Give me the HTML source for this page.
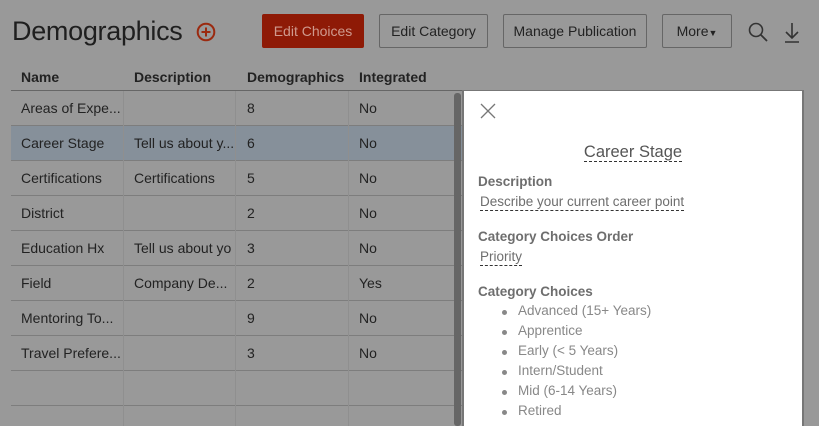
<!DOCTYPE html><html><head><style>
*{margin:0;padding:0;box-sizing:border-box}
body{width:819px;height:426px;overflow:hidden;background:#999;font-family:"Liberation Sans",sans-serif;color:#1e1e1e;position:relative}
.a{position:absolute;white-space:nowrap}
.btn{position:absolute;top:14px;height:34px;border:1px solid #666;border-radius:2px;font-size:14px;line-height:32px;text-align:center;color:#222}
.hl{position:absolute;left:11px;width:451px;height:1px;background:#7d7d7d}
.vl{position:absolute;top:91px;width:1px;height:335px;background:#8f8f8f}
.c{position:absolute;font-size:14px;color:#222;overflow:hidden;white-space:nowrap;max-width:105px}
.p{position:absolute;left:464px;top:91px;width:338px;height:335px;background:#fff}
.lab{position:absolute;left:14px;font-size:13.5px;font-weight:bold;color:#6e6e6e}
.val{position:absolute;left:16px;font-size:13.5px;color:#6e6e6e;border-bottom:1px dashed #333;line-height:17px}
.li{position:absolute;left:54px;font-size:13.5px;color:#888}
.li:before{content:"";position:absolute;left:-16px;top:7px;width:5px;height:5px;border-radius:50%;background:#888}
</style></head><body>
<div class="a" style="left:12px;top:16px;font-size:27px;color:#1f1f1f;letter-spacing:-0.3px">Demographics</div>
<svg class="a" style="left:196px;top:22px" width="20" height="20"><circle cx="10" cy="10" r="8.3" fill="none" stroke="#9b2a10" stroke-width="2"/><path d="M10 5.5v9M5.5 10h9" stroke="#9b2a10" stroke-width="2"/></svg>
<div class="btn" style="left:262px;width:102px;background:#8e1a06;border-color:#8e1a06;color:#cf9a8e">Edit Choices</div>
<div class="btn" style="left:379px;width:109px">Edit Category</div>
<div class="btn" style="left:503px;width:144px">Manage Publication</div>
<div class="btn" style="left:662px;width:70px">More<span style="font-size:9px">▼</span></div>
<svg class="a" style="left:747px;top:21px" width="22" height="22"><circle cx="9" cy="9" r="6.5" fill="none" stroke="#333" stroke-width="1.6"/><path d="M14 14l6 6" stroke="#333" stroke-width="1.8"/></svg>
<svg class="a" style="left:782px;top:20px" width="20" height="24"><path d="M10 3v15M4 12l6 6 6-6M3 22h14" fill="none" stroke="#333" stroke-width="1.6"/></svg>
<div class="c" style="left:21px;top:69px;font-weight:bold">Name</div>
<div class="c" style="left:134px;top:69px;font-weight:bold">Description</div>
<div class="c" style="left:247px;top:69px;font-weight:bold">Demographics</div>
<div class="c" style="left:359px;top:69px;font-weight:bold">Integrated</div>
<div class="a" style="left:11px;top:126px;width:451px;height:34px;background:#86909a"></div>
<div class="hl" style="top:90px;background:#666"></div>
<div class="hl" style="top:125px"></div><div class="hl" style="top:160px"></div><div class="hl" style="top:195px"></div><div class="hl" style="top:230px"></div><div class="hl" style="top:265px"></div><div class="hl" style="top:300px"></div><div class="hl" style="top:335px"></div><div class="hl" style="top:370px"></div><div class="hl" style="top:405px"></div>
<div class="vl" style="left:123px"></div><div class="vl" style="left:235px"></div><div class="vl" style="left:348px"></div>
<div class="c" style="left:21px;top:100px">Areas of Expe...</div><div class="c" style="left:247px;top:100px">8</div><div class="c" style="left:359px;top:100px">No</div>
<div class="c" style="left:21px;top:135px">Career Stage</div><div class="c" style="left:134px;top:135px">Tell us about y...</div><div class="c" style="left:247px;top:135px">6</div><div class="c" style="left:359px;top:135px">No</div>
<div class="c" style="left:21px;top:170px">Certifications</div><div class="c" style="left:134px;top:170px">Certifications</div><div class="c" style="left:247px;top:170px">5</div><div class="c" style="left:359px;top:170px">No</div>
<div class="c" style="left:21px;top:205px">District</div><div class="c" style="left:247px;top:205px">2</div><div class="c" style="left:359px;top:205px">No</div>
<div class="c" style="left:21px;top:240px">Education Hx</div><div class="c" style="left:134px;top:240px;max-width:98px">Tell us about you</div><div class="c" style="left:247px;top:240px">3</div><div class="c" style="left:359px;top:240px">No</div>
<div class="c" style="left:21px;top:275px">Field</div><div class="c" style="left:134px;top:275px">Company De...</div><div class="c" style="left:247px;top:275px">2</div><div class="c" style="left:359px;top:275px">Yes</div>
<div class="c" style="left:21px;top:310px">Mentoring To...</div><div class="c" style="left:247px;top:310px">9</div><div class="c" style="left:359px;top:310px">No</div>
<div class="c" style="left:21px;top:345px">Travel Prefere...</div><div class="c" style="left:247px;top:345px">3</div><div class="c" style="left:359px;top:345px">No</div>
<div class="a" style="left:454px;top:93px;width:7px;height:333px;background:#666;border-radius:3px"></div>
<div class="a" style="left:462px;top:90px;width:342px;height:336px;background:#777"></div>
<div class="p">
<svg class="a" style="left:16px;top:12px" width="16" height="16"><path d="M1 1l14 14M15 1L1 15" stroke="#777" stroke-width="1.3"/></svg>
<div class="a" style="left:0;width:338px;top:51px;text-align:center"><span style="font-size:16.5px;color:#555;border-bottom:1px dashed #333;line-height:20px">Career Stage</span></div>
<div class="lab" style="top:83px">Description</div>
<div class="val" style="top:102px">Describe your current career point</div>
<div class="lab" style="top:138px">Category Choices Order</div>
<div class="val" style="top:157px">Priority</div>
<div class="lab" style="top:193px">Category Choices</div>
<div class="li" style="top:212px">Advanced (15+ Years)</div>
<div class="li" style="top:232px">Apprentice</div>
<div class="li" style="top:252px">Early (&lt; 5 Years)</div>
<div class="li" style="top:272px">Intern/Student</div>
<div class="li" style="top:292px">Mid (6-14 Years)</div>
<div class="li" style="top:312px">Retired</div>
</div>
</body></html>
